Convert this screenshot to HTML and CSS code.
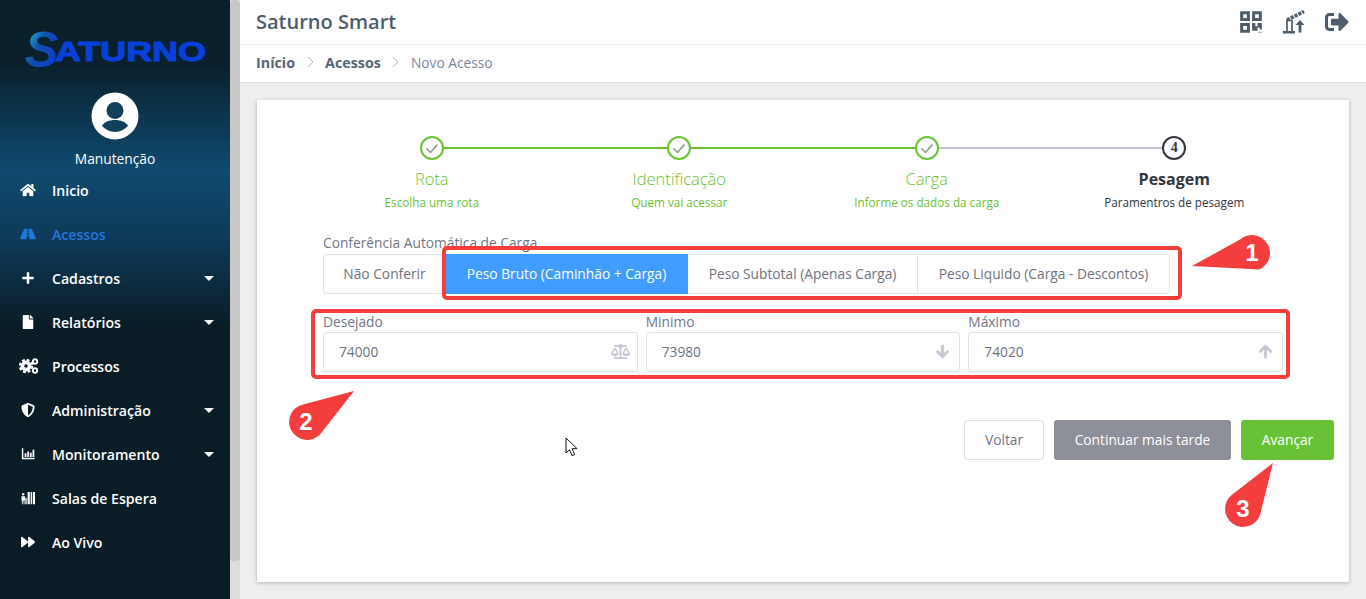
FILE: index.html
```html
<!DOCTYPE html>
<html lang="pt-BR">
<head>
<meta charset="utf-8">
<title>Saturno Smart</title>
<link rel="stylesheet" href="styles.css">
</head>
<body>
<div class="app">
  <aside class="sidebar">
    <div class="logo">
      <svg width="190" height="46" viewBox="0 0 190 46">
        <defs>
          <linearGradient id="sgrad" x1="0" y1="0" x2="1" y2="1">
            <stop offset="0" stop-color="#2be0e6"/><stop offset=".42" stop-color="#1250a8"/><stop offset="1" stop-color="#0a35e0"/>
          </linearGradient>
        </defs>
        <text class="logo-t" x="30" y="32" textLength="151" lengthAdjust="spacingAndGlyphs">ATURNO</text>
        <text class="logo-s" x="0" y="38" fill="url(#sgrad)">S</text>
      </svg>
    </div>
    <div class="profile">
      <svg class="avatar" width="48" height="48" viewBox="0 0 48 48"><circle cx="24" cy="24" r="23.5" fill="#fff"/><circle cx="24" cy="18.5" r="8.5" fill="#12405c"/><path d="M11 34c2-4 7-6 13-6s11 2 13 6c-3 3-8 6-13 6s-10-3-13-6z" fill="#12405c"/></svg>
      <span class="profile-name">Manutenção</span>
    </div>
    <nav class="menu">
      <a class="item"><svg class="ico" viewBox="0 0 576 512"><path d="M280.37 148.26L96 300.11V464a16 16 0 0 0 16 16l112.06-.29a16 16 0 0 0 15.92-16V368a16 16 0 0 1 16-16h64a16 16 0 0 1 16 16v95.64a16 16 0 0 0 16 16.05L464 480a16 16 0 0 0 16-16V300L295.67 148.26a12.19 12.19 0 0 0-15.3 0zM571.6 251.47L488 182.56V44.05a12 12 0 0 0-12-12h-56a12 12 0 0 0-12 12v72.61L318.47 43a48 48 0 0 0-61 0L4.34 251.47a12 12 0 0 0-1.6 16.9l25.5 31A12 12 0 0 0 45.15 301l235.22-193.74a12.19 12.19 0 0 1 15.3 0L530.9 301a12 12 0 0 0 16.9-1.6l25.5-31a12 12 0 0 0-1.7-16.93z"/></svg><span class="label">Inicio</span></a>
      <a class="item active"><svg class="ico" viewBox="0 0 576 512"><path d="M573.19 402.67l-139.79-320C428.43 71.29 417.6 64 405.68 64h-97.59l2.45 23.16c.5 4.72-3.21 8.84-7.96 8.84h-29.16c-4.75 0-8.46-4.12-7.96-8.84L267.91 64h-97.59c-11.93 0-22.76 7.29-27.73 18.67L2.8 402.67C-6.45 423.86 8.31 448 30.54 448h196.84l10.31-97.68c.86-8.14 7.72-14.32 15.91-14.32h68.8c8.19 0 15.05 6.18 15.91 14.32L348.62 448h196.84c22.23 0 36.99-24.14 27.73-45.33zM260.4 135.16a8 8 0 0 1 7.96-7.16h39.29c4.09 0 7.53 3.09 7.96 7.16l4.6 43.58c.75 7.09-4.81 13.26-11.93 13.26h-40.54c-7.13 0-12.68-6.17-11.93-13.26l4.6-43.58zM315.64 304h-55.29c-9.5 0-16.91-8.23-15.91-17.68l5.07-48c.86-8.14 7.72-14.32 15.91-14.32h45.15c8.19 0 15.05 6.18 15.91 14.32l5.07 48c1 9.45-6.41 17.68-15.91 17.68z"/></svg><span class="label">Acessos</span></a>
      <a class="item"><svg class="ico" viewBox="0 0 16 16"><path d="M6.6 1.5h2.8v5.1h5.1v2.8H9.4v5.1H6.6V9.4H1.5V6.6h5.1z"/></svg><span class="label">Cadastros</span><i class="caret"></i></a>
      <a class="item"><svg class="ico" viewBox="0 0 384 512"><path d="M224 136V0H24C10.7 0 0 10.7 0 24v464c0 13.3 10.7 24 24 24h336c13.3 0 24-10.7 24-24V160H248c-13.2 0-24-10.8-24-24zm160-14.1v6.1H256V0h6.1c6.4 0 12.5 2.5 17 7l97.9 98c4.5 4.5 7 10.6 7 16.9z"/></svg><span class="label">Relatórios</span><i class="caret"></i></a>
      <a class="item"><svg class="ico ico-wide" viewBox="0 0 20 16"><circle cx="7" cy="8" r="3.6" fill="none" stroke="#fff" stroke-width="3.6"/><circle cx="7" cy="8" r="6" fill="none" stroke="#fff" stroke-width="2.4" stroke-dasharray="2.8 1.91"/><circle cx="16" cy="3.500" r="2.200" fill="none" stroke="#fff" stroke-width="1.900"/><circle cx="16" cy="12.500" r="2.200" fill="none" stroke="#fff" stroke-width="1.900"/></svg><span class="label">Processos</span></a>
      <a class="item"><svg class="ico" viewBox="0 0 512 512"><path d="M466.5 83.7l-192-80a48.15 48.15 0 0 0-36.9 0l-192 80C27.7 91.1 16 108.6 16 128c0 198.5 114.5 335.7 221.5 380.3 11.8 4.9 25.1 4.9 36.9 0C360.1 472.6 496 349.3 496 128c0-19.4-11.7-36.9-29.5-44.3zM256.1 446.3l-.1-381 175.9 73.3c-3.3 151.4-82.1 261.1-175.8 307.7z"/></svg><span class="label">Administração</span><i class="caret"></i></a>
      <a class="item"><svg class="ico" viewBox="0 0 16 16"><path d="M1 1.500h1.600v10.900H15.500V14H1zM4.200 7h2v4.500h-2zM7.200 5h2v6.500h-2zM10.200 6.500h2v5h-2zM13.200 3h2v8.500h-2z"/></svg><span class="label">Monitoramento</span><i class="caret"></i></a>
      <a class="item"><svg class="ico" viewBox="0 0 16 16"><path d="M7.500 1H10v14H7.500zM11 1h1.500v14H11zM13.500 1H16v14h-2.500zM2.500 2.200a1.500 1.500 0 1 1 0 3 1.500 1.500 0 0 1 0-3zM0.500 6h4.200v4.500H4V15H3v-4H2v4H1v-4.500H.5zM5 8h1.500v7H5z"/></svg><span class="label">Salas de Espera</span></a>
      <a class="item"><svg class="ico" viewBox="0 0 512 512"><path d="M500.500 231.400l-192-160C287.900 54.300 256 68.600 256 96v320c0 27.400 31.900 41.800 52.500 24.600l192-160c15.300-12.800 15.300-36.400 0-49.200zm-256 0l-192-160C31.900 54.300 0 68.600 0 96v320c0 27.400 31.900 41.800 52.500 24.600l192-160c15.300-12.800 15.300-36.400 0-49.200z"/></svg><span class="label">Ao Vivo</span></a>
    </nav>
  </aside>
  <div class="scrollbar"><div class="thumb"></div></div>
  <main class="main">
    <header class="topbar">
      <h1 class="brand">Saturno Smart</h1>
      <div class="tools">
        <svg class="tool" width="26" height="26" viewBox="0 0 24 24"><path fill-rule="evenodd" d="M2 2h9v9H2zM4.800 4.800v3.400h3.400V4.800zM13 2h9v9h-9zM15.800 4.800v3.400h3.400V4.800zM2 13h9v9H2zM4.800 15.800v3.400h3.400v-3.400zM13 13h3v3h2v-3h4v6h-2v-2h-2v3h-5zM19 21h1v1h-1zM21 21h1v1h-1z"/></svg>
        <svg class="tool" width="25" height="26" viewBox="0 0 25 26"><path d="M1 22h12v2.500H1z"/><path fill="none" stroke="#4e5d6c" stroke-width="1.700" d="M5 22V11.500h5V22"/><path fill="none" stroke="#4e5d6c" stroke-width="3.600" stroke-dasharray="3.200 1" d="M5 11L22 2.500"/><path d="M18 11l4.500 5h-3.100v7.500h-2.800V16h-3.100z"/></svg>
        <svg class="tool" width="24" height="24" viewBox="0 0 512 512"><path d="M497 273L329 441c-15 15-41 4.500-41-17v-96H152c-13.300 0-24-10.700-24-24v-96c0-13.300 10.700-24 24-24h136V88c0-21.400 25.900-32 41-17l168 168c9.300 9.400 9.300 24.600 0 34zM192 436v-40c0-6.600-5.400-12-12-12H96c-17.700 0-32-14.300-32-32V160c0-17.700 14.300-32 32-32h84c6.600 0 12-5.400 12-12V76c0-6.600-5.400-12-12-12H96c-53 0-96 43-96 96v192c0 53 43 96 96 96h84c6.600 0 12-5.400 12-12z"/></svg>
      </div>
    </header>
    <div class="crumbs">
      <span class="crumb">Início</span>
      <svg class="chev" width="7" height="12" viewBox="0 0 7 12"><path d="M1 1l5 5-5 5" fill="none" stroke="#b5bcc6"/></svg>
      <span class="crumb">Acessos</span>
      <svg class="chev" width="7" height="12" viewBox="0 0 7 12"><path d="M1 1l5 5-5 5" fill="none" stroke="#b5bcc6"/></svg>
      <span class="crumb current">Novo Acesso</span>
    </div>
    <section class="content">
      <div class="card">
        <ol class="steps">
          <li class="step done line-green"><span class="dot"><svg width="14" height="11" viewBox="0 0 14 11"><path d="M1.500 5.500l4 4 7-8" fill="none" stroke="#7f9c7c" stroke-width="1.500"/></svg></span><span class="step-title">Rota</span><span class="step-sub">Escolha uma rota</span></li>
          <li class="step done line-green"><span class="dot"><svg width="14" height="11" viewBox="0 0 14 11"><path d="M1.500 5.500l4 4 7-8" fill="none" stroke="#7f9c7c" stroke-width="1.500"/></svg></span><span class="step-title">Identificação</span><span class="step-sub">Quem vai acessar</span></li>
          <li class="step done line-gray"><span class="dot"><svg width="14" height="11" viewBox="0 0 14 11"><path d="M1.500 5.500l4 4 7-8" fill="none" stroke="#7f9c7c" stroke-width="1.500"/></svg></span><span class="step-title">Carga</span><span class="step-sub">Informe os dados da carga</span></li>
          <li class="step current"><span class="dot">4</span><span class="step-title">Pesagem</span><span class="step-sub">Paramentros de pesagem</span></li>
        </ol>
        <form class="form">
          <label class="field-label">Conferência Automática de Carga</label>
          <div class="btn-group">
            <button type="button" class="seg seg-a">Não Conferir</button>
            <button type="button" class="seg seg-b on">Peso Bruto (Caminhão + Carga)</button>
            <button type="button" class="seg seg-c">Peso Subtotal (Apenas Carga)</button>
            <button type="button" class="seg seg-d">Peso Liquido (Carga - Descontos)</button>
          </div>
          <div class="inputs">
            <div class="field"><label class="field-label">Desejado</label><div class="input"><span class="value">74000</span>
              <svg class="addon" width="19" height="15" viewBox="0 0 640 512"><path d="M256 336h-.02c0-16.180 1.340-8.730-85.050-181.510-17.650-35.290-68.190-35.360-85.870 0C-2.060 328.750.02 320.330.02 336H0c0 44.180 57.310 80 128 80s128-35.820 128-80zM128 176l72 144H56l72-144zm511.980 160c0-16.180 1.340-8.730-85.050-181.510-17.650-35.290-68.190-35.360-85.870 0-87.120 174.260-85.040 165.840-85.040 181.510H384c0 44.180 57.310 80 128 80s128-35.820 128-80h-.02zM440 320l72-144 72 144H440zm88 128H352V153.250c23.510-10.290 41.160-31.480 46.390-57.250H528c8.840 0 16-7.160 16-16V48c0-8.840-7.160-16-16-16H383.640C369.040 12.680 346.090 0 320 0s-49.040 12.680-63.640 32H112c-8.840 0-16 7.160-16 16v32c0 8.840 7.160 16 16 16h129.610c5.230 25.760 22.870 46.960 46.390 57.250V448H112c-8.840 0-16 7.160-16 16v32c0 8.840 7.160 16 16 16h416c8.840 0 16-7.160 16-16v-32c0-8.840-7.160-16-16-16z"/></svg></div></div>
            <div class="field"><label class="field-label">Minimo</label><div class="input narrow"><span class="value">73980</span>
              <svg class="addon arrow" width="13" height="15" viewBox="0 0 448 512"><path d="M413.100 222.500l22.200 22.200c9.400 9.400 9.400 24.600 0 33.900L241 473c-9.400 9.400-24.600 9.400-33.900 0L12.700 278.600c-9.400-9.400-9.400-24.600 0-33.900l22.200-22.200c9.500-9.500 25-9.300 34.300.4L184 343.400V56c0-13.300 10.700-24 24-24h32c13.300 0 24 10.700 24 24v287.400l114.800-120.500c9.300-9.800 24.800-10 34.300-.4z"/></svg></div></div>
            <div class="field"><label class="field-label">Máximo</label><div class="input narrow"><span class="value">74020</span>
              <svg class="addon arrow flip" width="13" height="15" viewBox="0 0 448 512"><path d="M413.100 222.500l22.200 22.200c9.400 9.400 9.400 24.600 0 33.900L241 473c-9.400 9.400-24.600 9.400-33.900 0L12.700 278.600c-9.400-9.400-9.400-24.600 0-33.900l22.200-22.200c9.500-9.500 25-9.300 34.300.4L184 343.400V56c0-13.300 10.700-24 24-24h32c13.300 0 24 10.700 24 24v287.400l114.800-120.500c9.300-9.800 24.800-10 34.300-.4z"/></svg></div></div>
          </div>
        </form>
        <div class="actions">
          <button type="button" class="btn btn-back">Voltar</button>
          <button type="button" class="btn btn-later">Continuar mais tarde</button>
          <button type="button" class="btn btn-next">Avançar</button>
        </div>
      </div>
    </section>
  </main>
</div>
<div class="mark mark-1"></div>
<div class="mark mark-2"></div>
<svg class="overlay" width="1366" height="599" viewBox="0 0 1366 599">
  <path class="pin" d="M1192 266L1240 239.600A18 18 0 1 1 1259 269.600Z"/>
  <path class="pin" d="M354 391L303 404.400A18 18 0 1 0 320 434.500Z"/>
  <path class="pin" d="M1273 463L1232 494.700A18 18 0 1 0 1260 515Z"/>
  <text class="pin-num" x="1252" y="261">1</text>
  <text class="pin-num" x="306" y="430">2</text>
  <text class="pin-num" x="1243" y="517">3</text>
  <path d="M566 438v15l3.500-3.300 2.600 6 2.600-1.100-2.600-5.900h5z" fill="#fff" stroke="#111" stroke-width="1"/>
</svg>
</body>
</html>
```
FILE: styles.css
```css
* { box-sizing: border-box; }
html, body { margin: 0; height: 599px; overflow: hidden; }
body { font-family: "Open Sans", "Liberation Sans", sans-serif; background: #eee; position: relative; }
.app { display: flex; height: 599px; }

.sidebar {
  width: 230px; flex: none; color: #fff;
  background: linear-gradient(180deg, #0a1f29 0, #0a212d 65px, #0f4a70 170px, #0e3a58 240px, #0a1d27 325px, #0a1d26 100%);
}
.logo { padding: 29px 0 0 25px; height: 92px; }
.logo svg { display: block; }
.logo-s { font: italic 700 50px "Liberation Sans", sans-serif; }
.logo-t { font: 700 27px "Liberation Sans", sans-serif; fill: #0840d8; stroke: #0840d8; stroke-width: 1.100px; }
.profile { display: flex; flex-direction: column; align-items: center; }
.avatar { display: block; margin-bottom: 9px; }
.profile-name { font-size: 13.750px; line-height: 19px; }
.menu { display: flex; flex-direction: column; }
.item { display: flex; align-items: center; height: 44px; padding: 0 15px 0 20px; font-size: 14.100px; font-weight: 600; color: #fff; }
.item.active { color: #1e79dc; }
.ico { width: 16px; height: 14px; flex: none; fill: currentColor; margin-right: 16px; }
.ico-wide { width: 20px; height: 16px; margin-left: -1px; margin-right: 13px; }
.label { flex: 1; }
.caret { width: 0; height: 0; border-left: 5px solid transparent; border-right: 5px solid transparent; border-top: 5px solid #fff; margin-right: 1px; }

.scrollbar { width: 10px; flex: none; background: #dedede; }
.thumb { height: 561px; background: #c8c8c8; border-radius: 4px; }

.main { flex: 1; min-width: 0; display: flex; flex-direction: column; }
.topbar { height: 45px; background: #fff; border-bottom: 1px solid #eceef0; display: flex; align-items: center; justify-content: space-between; padding: 0 17px 0 16px; }
.brand { margin: 0 0 2px; font-size: 20px; font-weight: 600; color: #4b5c6d; }
.tools { display: flex; align-items: center; gap: 18px; }
.tool { display: block; fill: #4e5d6c; }
.crumbs { height: 38px; background: #fff; border-bottom: 1px solid #dfe3e8; display: flex; align-items: center; padding: 0 16px 3px; gap: 11.500px; }
.crumb { font-size: 14.300px; font-weight: 700; color: #566676; }
.crumb.current { font-size: 13.750px; font-weight: 400; color: #7c879c; }
.chev { display: block; }
.content { flex: 1; padding: 17px; }
.card { height: 482px; background: #fff; box-shadow: 0 1px 4px rgba(90, 95, 115, .4); }

.steps { list-style: none; margin: 0; padding: 36px 51px 0; display: flex; }
.step { flex: 1; display: flex; flex-direction: column; align-items: center; position: relative; color: #69c235; }
.step::after { content: ""; position: absolute; top: 11px; left: calc(50% + 12px); width: calc(100% - 24px); height: 2px; }
.line-green::after { background: #69c235; }
.line-gray::after { background: #bfc2cc; }
.current::after { display: none; }
.dot { width: 24px; height: 24px; border: 2px solid #69c235; border-radius: 50%; display: flex; align-items: center; justify-content: center; font: 700 14px/1 "Liberation Serif", serif; color: #333842; }
.step-title { margin-top: 7px; font-size: 16.500px; line-height: 24px; font-weight: 300; }
.step-sub { font-size: 11.700px; line-height: 16px; margin-top: 3px; }
.step.current { color: #33363f; }
.step.current .dot { border-color: #33363f; }
.step.current .step-title { font-weight: 700; font-size: 16px; }

.form { padding: 24px 66px 0; }
.field-label { display: block; font-size: 13.750px; line-height: 18px; color: #717684; font-weight: 400; }
.btn-group { display: flex; height: 40px; margin-top: 2px; }
.seg { height: 40px; padding: 0 0 2px; font: 400 13.750px "Open Sans", sans-serif; color: #6f7280; background: #fff; border: 1px solid #e1e3ea; border-left-width: 0; }
.seg-a { width: 123px; border-left-width: 1px; border-radius: 3px 0 0 3px; }
.seg-b { width: 242px; }
.seg-c { width: 230px; }
.seg-d { width: 252px; border-radius: 0 3px 3px 0; }
.seg.on { background: #409cff; border-color: #409cff; color: #fff; }
.inputs { display: grid; grid-template-columns: repeat(3, 1fr); column-gap: 8px; margin-top: 19px; }
.input { height: 40px; margin-top: 1px; border: 1px solid #e1e3ea; border-radius: 3px; display: flex; align-items: center; justify-content: space-between; padding: 0 7px 0 15px; font-size: 13.750px; color: #6f7280; }
.input.narrow { padding-right: 10px; }
.value { margin-bottom: 2px; }
.addon { fill: #c4c8d2; display: block; margin-bottom: 2px; }
.arrow { stroke: #c4c8d2; stroke-width: 24px; }
.flip { transform: rotate(180deg); }

.actions { display: flex; justify-content: flex-end; gap: 10px; margin-top: 48px; padding-right: 15px; }
.btn { height: 40px; padding: 0 0 2px; border-radius: 3px; font: 400 13.750px "Open Sans", sans-serif; border: 1px solid transparent; }
.btn-back { width: 80px; background: #fff; border-color: #e1e3ea; color: #6f7280; }
.btn-later { width: 177px; background: #8e9099; color: #fff; }
.btn-next { width: 93px; background: #69c235; color: #fff; }

.mark { position: absolute; border: 4px solid #f43e3e; border-radius: 5px; pointer-events: none; }
.mark-1 { left: 442px; top: 246px; width: 740px; height: 54px; }
.mark-2 { left: 311px; top: 309px; width: 979px; height: 70px; }
.overlay { position: absolute; left: 0; top: 0; pointer-events: none; }
.pin { fill: #f43e3e; }
.pin-num { fill: #fff; font: 700 24px "Liberation Sans", sans-serif; text-anchor: middle; }
```
